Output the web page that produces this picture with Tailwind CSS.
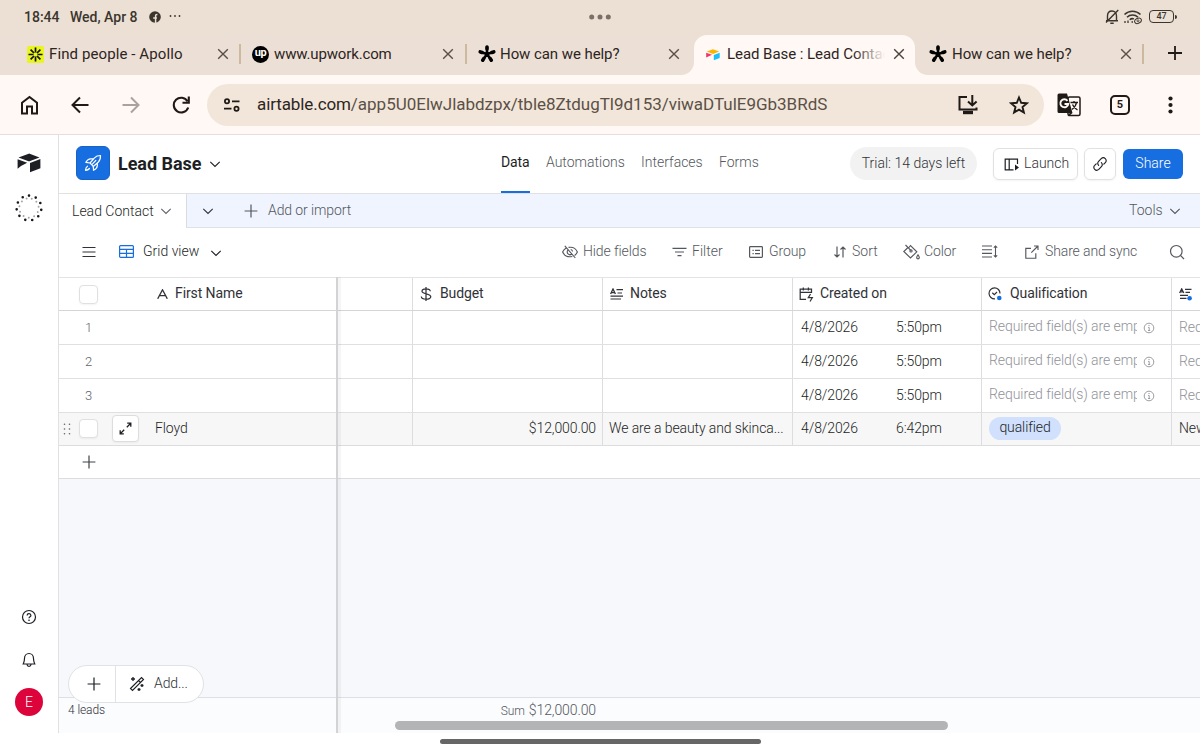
<!DOCTYPE html>
<html lang="en">
<head>
  <meta charset="UTF-8" />
  <title>Lead Base : Lead Contact - Airtable</title>
  <meta name="viewport" content="width=device-width, initial-scale=1.0" />
  <script src="https://cdn.jsdelivr.net/npm/@tailwindcss/browser@4"></script>
</head>
<body class="w-[1200px] h-[750px] overflow-hidden bg-white font-['Roboto',sans-serif] text-[14px] text-[#1d1f25] whitespace-nowrap">

  <!-- shared icons -->
  <svg class="hidden">
    <symbol id="close" viewBox="0 0 12 12"><path d="M1.2 1.2l9.6 9.6M10.8 1.2l-9.6 9.6" fill="none" stroke="currentColor" stroke-width="1.4" /></symbol>
    <symbol id="chevron" viewBox="0 0 12 12"><path d="M1.300 3.800L6 8.500l4.700-4.700" fill="none" stroke="currentColor" stroke-width="1.100" /></symbol>
    <symbol id="plus" viewBox="0 0 14 14"><path d="M7 .6v12.800M.6 7h12.800" fill="none" stroke="currentColor" stroke-width="1.2" /></symbol>
    <symbol id="aster" viewBox="-9 -9 18 18">
      <g fill="none" stroke="#000" stroke-linecap="round">
        <path d="M0 0V-7M0 0L6.800-2.100M0 0L4.300 6.200M0 0L-4.300 6.200M0 0L-6.800-2.100" stroke-width="2.600" />
        <path d="M0-5V-7M4.900-1.500L6.800-2.100M3.200 4.600L4.300 6.200M-3.200 4.600L-4.300 6.200M-4.900-1.500L-6.800-2.100" stroke-width="3.500" />
      </g>
    </symbol>
    <symbol id="info" viewBox="0 0 12 12"><circle cx="6" cy="6" r="4.800" fill="none" stroke="currentColor" stroke-width=".9" /><path d="M5.200 5.500H6.200V8.500M5 8.500h2.200" fill="none" stroke="currentColor" stroke-width=".9" /><circle cx="6" cy="3.600" r=".7" fill="currentColor" /></symbol>
    <symbol id="longtext" viewBox="0 0 14 12"><path d="M.6 6L3 1l2.400 5M1.400 4.600h3.200" fill="none" stroke="currentColor" stroke-width="1.300" /><path d="M6.500 1.600H13M7.500 5H12M.5 8.200H13M.5 11H11" fill="none" stroke="currentColor" stroke-width="1.200" /></symbol>
  </svg>

  <!-- status bar -->
  <div class="h-[35px] bg-[#ece0d4] flex items-center pl-6 pr-[23px] text-[#3b352e] font-medium">
    <span class="w-[46px] text-[14px] mt-[-1px]">18:44</span>
    <span class="w-[79px] text-[14px] mt-[-1px]">Wed, Apr 8</span>
    <svg class="size-3 mt-[-2px]" viewBox="0 0 12 12"><circle cx="6" cy="6" r="5.800" fill="#3b352e" /><path d="M6.600 12V5.200c0-1.300.4-1.800 1.800-1.700M4.200 6.900h3.700" fill="none" stroke="#ece0d4" stroke-width="1.500" /></svg>
    <svg class="w-3 h-3 ml-2 mt-[-3px]" viewBox="0 0 12 12" fill="#3b352e"><circle cx="1.500" cy="6" r=".9" /><circle cx="6" cy="6" r=".9" /><circle cx="10.500" cy="6" r=".9" /></svg>
    <svg class="w-[24px] h-6 ml-[407px] mt-[-2px]" viewBox="0 0 24 24" fill="#7b7067"><circle cx="3.700" cy="12" r="2.500" /><circle cx="12" cy="12" r="2.500" /><circle cx="20.300" cy="12" r="2.500" /></svg>
    <svg class="w-[14px] h-[16px] ml-auto mt-[-2px]" viewBox="0 0 14 16" fill="none" stroke="#3b352e" stroke-width="1.400"><path d="M2.500 11.500V7c0-3 1.700-5 4.500-5s4.500 2 4.500 5v4.500M1 11.800h12M5.300 14.300h3.400M13.300 1L1 13.500" /></svg>
    <svg class="w-[20px] h-[16px] ml-[4px] mt-[-2px]" viewBox="0 0 20 16" fill="none" stroke="#3b352e" stroke-width="1.600"><path d="M1.500 5.500c4.500-4.400 11.500-4.400 16 0M4 8.300c3-3 8-3 11 0M6.800 10.800c1.200-1.200 2.800-1.400 4-.8" /><path d="M2 12v2M5 11.500v2.500M8.500 13h1.500" stroke-width="1.300" /><ellipse cx="15" cy="11.800" rx="3.500" ry="2.500" transform="rotate(-25 15 11.800)" stroke-width="1" /><circle cx="15" cy="11.800" r="1" stroke-width=".8" /></svg>
    <div class="ml-[6px] mt-[-2px] w-[25px] h-[13px] shrink-0 border-[1.500px] border-[#3b352e] rounded-[4px] flex items-center justify-center text-[9px] leading-none">47</div>
    <div class="w-[2px] h-1 ml-px mt-[-2px] bg-[#3b352e] rounded-r"></div>
  </div>

  <!-- browser tabs -->
  <div class="h-10 bg-[#ece0d4] flex items-center text-[15px] text-[#2c251e]">
    <div class="w-[240px] h-full bg-[#ecdfd5] flex items-center pl-[27px] pr-[11px]">
      <svg class="w-[17px] h-[17px] mr-[5px] mt-[-2px]" viewBox="-8.500 -8.500 17 17"><rect x="-8.500" y="-8.500" width="17" height="17" rx="1.500" fill="#e9f522" /><path d="M0-7V-2M0 7V2M-7 0H-2M7 0H2M-4.900-4.900L-1.500-1.500M4.900 4.900L1.500 1.500M-4.900 4.900L-1.500 1.500M4.900-4.900L1.500-1.500" stroke="#111" stroke-width="1.700" /></svg>
      <span class="flex-1 mt-[-2px] tracking-[0.1px]">Find people - Apollo</span>
      <svg class="size-3 mt-[-2px] text-[#5a5048]"><use href="#close" /></svg>
    </div>
    <div class="w-[226px] h-full bg-[#ecdfd5] flex items-center pr-3">
      <div class="w-[2px] h-5 bg-[#cdb99d] mt-[-3px] mr-[11px] -ml-px"></div>
      <div class="w-[17px] h-[17px] mr-[5px] mt-[-2px] rounded-full bg-black text-white text-[11px] leading-[14px] font-bold text-center tracking-[-0.5px]">up</div>
      <span class="flex-1 mt-[-2px] tracking-[-0.14px]">www.upwork.com</span>
      <svg class="size-3 mt-[-2px] text-[#5a5048]"><use href="#close" /></svg>
    </div>
    <div class="w-[228px] h-full bg-[#fff8f4]">
      <div class="h-full bg-[#ecdfd5] rounded-br-[13px] flex items-center pr-[14px]">
        <div class="w-[2px] h-5 bg-[#cdb99d] mt-[-3px] mr-[11px] -ml-px"></div>
        <svg class="w-[18px] h-[18px] mr-1 mt-[-2px]"><use href="#aster" /></svg>
        <span class="flex-1 mt-[-2px] tracking-[-0.07px]">How can we help?</span>
        <svg class="size-3 mt-[-2px] text-[#5a5048]"><use href="#close" /></svg>
      </div>
    </div>
    <div class="w-[221px] h-full bg-[#fff8f4] rounded-t-[13px] flex items-center pl-[12px] pr-[10px]">
      <svg class="w-[14px] h-[12px] mr-[7px] mt-[-1px]" viewBox="0 0 14 12"><path d="M.8 2.600L7 .3l6.200 2.300L7 5z" fill="#fcb400" /><path d="M7.800 6L13.700 3.800V9L7.800 11.300z" fill="#18bfff" /><path d="M.2 3.800L6 5.800.2 8.600z" fill="#f0356a" /></svg>
      <div class="relative w-[158px] overflow-hidden mt-[-2px] tracking-[-0.05px]">Lead Base : Lead Contact<div class="absolute right-0 top-0 w-8 h-full bg-linear-to-r from-[#fff8f4]/0 to-[#fff8f4]"></div></div>
      <svg class="size-3 mt-[-2px] ml-[8px] text-[#4a423b] shrink-0"><use href="#close" /></svg>
    </div>
    <div class="w-[285px] h-full bg-[#fff8f4]">
      <div class="h-full bg-[#ecdfd5] rounded-bl-[13px] flex items-center pl-[14px]">
        <svg class="w-[18px] h-[18px] mr-[5px] mt-[-2px]"><use href="#aster" /></svg>
        <span class="w-[168px] mt-[-2px] tracking-[-0.07px]">How can we help?</span>
        <svg class="size-3 mt-[-2px] text-[#5a5048]"><use href="#close" /></svg>
        <div class="w-[2px] h-5 bg-[#cdb99d] mt-[-3px] ml-[10px]"></div>
        <svg class="w-[14px] h-[14px] ml-[24px] mt-[-4px]" viewBox="0 0 14 14"><path d="M7 0v14M0 7h14" stroke="#1f1a16" stroke-width="1.800" /></svg>
      </div>
    </div>
  </div>

  <!-- address bar -->
  <div class="h-[60px] bg-[#fff8f4] border-b border-[#e5dfdb] flex items-center pl-[20px] text-[#1f1a16]">
    <svg class="w-[19px] h-[20px]" viewBox="0 0 19 20" fill="none" stroke="currentColor" stroke-width="2"><path d="M2 7.800L9.500 2 17 7.800V18.500H12V11.500H7V18.500H2z" /></svg>
    <svg class="w-[18px] h-[18px] ml-[32px]" viewBox="0 0 18 18" fill="none" stroke="currentColor" stroke-width="2"><path d="M17.500 9H2M9 1.500L1.500 9 9 16.500" /></svg>
    <svg class="w-[18px] h-[18px] ml-[33px] text-[#a9a29d]" viewBox="0 0 18 18" fill="none" stroke="currentColor" stroke-width="2"><path d="M.5 9h15M9 1.500L16.500 9 9 16.500" /></svg>
    <svg class="w-[18px] h-[18px] ml-[32px]" viewBox="0 0 18 18" fill="none" stroke="currentColor" stroke-width="2.100"><path d="M15.500 5.200A7.400 7.400 0 1 0 16.200 11.500M16.800 .5V6.700H10.500" /></svg>
    <div class="ml-[17px] w-[837px] h-[42px] rounded-full bg-[#f2e6da] flex items-center pl-4 pr-[15px]">
      <svg class="w-[18px] h-[14px]" viewBox="0 0 18 14" fill="none" stroke="currentColor" stroke-width="1.800"><circle cx="4" cy="3.300" r="2.100" /><path d="M9 3.300h7.500M1 10.700h7.500" /><circle cx="13.500" cy="10.700" r="2.100" /></svg>
      <span class="ml-[16px] flex-1 text-[17px] text-[#5b5046] tracking-[-0.015px]"><span class="text-[#2c251e] tracking-[-0.1px]">airtable.com</span>/app5U0ElwJlabdzpx/tble8ZtdugTl9d153/viwaDTulE9Gb3BRdS</span>
      <svg class="w-5 h-[20px]" viewBox="0 0 20 20" fill="none" stroke="currentColor" stroke-width="2"><path d="M9 2H1.500V14.500H18.500V12.500M14.300 0V10M10 6.500L14.300 10.500 18.600 6.500" /><path d="M5 17.500h10" stroke-width="3.400" /></svg>
      <svg class="w-[20px] h-[20px] ml-[31px]" viewBox="0 0 20 20" fill="none" stroke="currentColor" stroke-width="1.900"><path d="M10 2.500L12.200 7.800 17.900 8.300 13.500 12 14.900 17.600 10 14.600 5.100 17.600 6.500 12 2.100 8.300 7.800 7.800z" /></svg>
    </div>
    <svg class="w-6 h-6 ml-[13px]" viewBox="0 0 24 24"><rect x="11" y="4" width="12" height="18.500" rx="1.500" fill="none" stroke="currentColor" stroke-width="1.500" /><path d="M2 .5H10L15.500 20H2A1.500 1.500 0 0 1 .5 18.500V2A1.500 1.500 0 0 1 2 .5z" fill="currentColor" /><path d="M12.500 20L11.500 23.500 15.500 20z" fill="currentColor" /><path d="M10.500 7.800A4 4 0 1 0 11.300 11H7.500" fill="none" stroke="#fff8f4" stroke-width="1.900" /><path d="M13.500 9.500H21M17 8V9.500M19.500 9.500C19 12.500 17 15 15 16.500M15.500 11.500C16.500 14 18 15.500 20.500 17" fill="none" stroke="currentColor" stroke-width="1.300" /></svg>
    <div class="ml-[29px] w-[20px] h-[20px] border-2 border-current rounded-[5px] flex items-center justify-center text-[11px] font-bold leading-none">5</div>
    <svg class="w-[5px] h-[18px] ml-[38px]" viewBox="0 0 5 18" fill="currentColor"><circle cx="2.500" cy="2.500" r="2.100" /><circle cx="2.500" cy="9" r="2.100" /><circle cx="2.500" cy="15.500" r="2.100" /></svg>
  </div>

  <div class="h-[598px] flex font-[350]">
    <!-- left rail -->
    <aside class="w-[59px] shrink-0 border-r border-[#e1e1e3] flex flex-col items-center">
      <svg class="w-6 h-5 mt-[18px]" viewBox="0 0 24 20" fill="#1d1f25"><path d="M1.500 4.500L11.700.7Q12.200.5 12.700.7L22.500 4.500 12.500 8.200Q12 8.400 11.500 8.200z" /><path d="M13 10L23.400 6V15.300L13 19.300z" /><path d="M.6 6.300L10.200 9.800 4 13 .6 15.800z" /></svg>
      <svg class="w-7 h-7 mt-[21px]" viewBox="-14 -14 28 28" fill="none" stroke-linecap="round"><circle r="12.400" stroke="#16181d" stroke-width="2.600" stroke-dasharray="0 7.083" transform="rotate(-90)" /><circle r="9.700" stroke="#a5a5a7" stroke-width="2" stroke-dasharray="0 5.541" transform="rotate(-73.600)" /></svg>
      <svg class="w-4 h-4 mt-auto" viewBox="0 0 16 16" fill="none" stroke="#1d1f25" stroke-width="1.200"><circle cx="8" cy="8" r="6.500" /><path d="M6.100 6.500C6.200 4 9.900 4.200 9.900 6.500 9.900 7.800 8 7.900 8 9.300" /><circle cx="8" cy="11.200" r=".5" fill="#1d1f25" stroke-width=".6" /></svg>
      <svg class="w-4 h-4 mt-[27px]" viewBox="0 0 16 16" fill="none" stroke="#1d1f25" stroke-width="1.200"><path d="M3.500 6.500C3.500 3.500 5.500 1.500 8 1.500S12.500 3.500 12.500 6.500C12.500 9.500 13.200 10.700 13.800 12H2.200C2.800 10.700 3.500 9.500 3.500 6.500zM6 12.500C6.300 15 9.700 15 10 12.500" /></svg>
      <div class="size-7 mt-[20px] mb-[17px] rounded-full bg-[#dc043b] text-white flex items-center justify-center text-[14px] font-light">E</div>
    </aside>

    <main class="w-[1141px] overflow-hidden">
      <!-- base header -->
      <header class="h-[59px] border-b border-[#e1e1e3] flex items-center pl-[17px] text-[#54575d]">
        <div class="w-[34px] h-[34px] mt-[-2px] rounded-[6px] bg-[#166ee1] border border-[#1a61c4] flex items-center justify-center">
          <svg class="w-[18px] h-[18px]" viewBox="0 0 18 18" fill="none" stroke="#fff" stroke-width="1.200" stroke-linejoin="round" stroke-linecap="round"><path d="M6 9L10.500 3.800C12.300 1.900 14.500 1.500 16.500 1.500 16.600 4 16 6.500 14.200 8.200L9 12.800M9.500 4.800H6.500C5 4.800 3 6.300 1.800 8.300L6 9 9.300 12.300 9.500 16.300C11.500 15.300 13.300 13.500 13.300 11.800V9.200M8.500 9.800L11.800 6.500M5.500 14.500C4.500 15.700 3 16.200 1.500 16.300 1.600 14.800 2 13 3.500 12.200" /></svg>
        </div>
        <h1 class="ml-2 mt-[-2px] w-[91px] text-[18px] font-bold text-[#1d1f25] tracking-[-0.05px]">Lead Base</h1>
        <svg class="size-3 mt-[-1px] text-[#1d1f25]"><use href="#chevron" /></svg>
        <nav class="ml-[280px] h-full flex">
          <div class="w-[29px] mr-4 h-full pt-[17px] font-normal text-[#1d1f25] border-b-2 border-[#166ee1] tracking-[-0.1px]">Data</div>
          <div class="w-[95px] pt-[17px]">Automations</div>
          <div class="w-[78px] pt-[17px]">Interfaces</div>
          <div class="w-[131px] pt-[17px]">Forms</div>
        </nav>
        <div class="w-[127px] h-[33px] mt-[-2px] rounded-full bg-[#f2f2f2] text-[#303238] flex items-center justify-center">Trial: 14 days left</div>
        <div class="ml-[16px] w-[85px] h-[32px] rounded-[6px] border border-[#e1e1e3] shadow-xs flex items-center pl-[10px] text-[#303238]">
          <svg class="w-[15px] h-[13px] mr-[5px] shrink-0" viewBox="0 0 15 13" fill="none" stroke="#1d1f25" stroke-width="1.200"><path d="M9.500 11.800H1.200V1.200H13.500V6M5.200 1.200V11.800" /><path d="M11 6.500L15 9.500 11 12.500z" fill="#1d1f25" stroke="none" /></svg>
          <span class="mt-[-2px]">Launch</span>
        </div>
        <div class="ml-[6px] w-[32px] h-[32px] rounded-[6px] border border-[#e1e1e3] shadow-xs flex items-center justify-center">
          <svg class="w-4 h-4" viewBox="0 0 16 16" fill="none" stroke="#1d1f25" stroke-width="1.150" stroke-linecap="round"><path d="M6.600 9.400C5.400 8.200 5.400 6.500 6.600 5.300L9.200 2.600C10.400 1.500 12.200 1.500 13.300 2.600 14.500 3.800 14.500 5.600 13.300 6.700L11.800 8.200M9.400 6.600C10.600 7.800 10.600 9.500 9.400 10.700L6.800 13.400C5.600 14.500 3.800 14.500 2.700 13.400 1.500 12.200 1.500 10.400 2.700 9.300L4.200 7.800" /></svg>
        </div>
        <div class="ml-[7px] w-[60px] h-[30px] rounded-[6px] bg-[#166ee1] text-white text-center leading-[28px]">Share</div>
      </header>

      <!-- table tabs -->
      <div class="h-[34px] bg-[#f0f4ff] flex text-[#54575d]">
        <div class="w-[128px] bg-white border-r border-[#d9dce3] flex items-center pl-[13px] text-[#1d1f25]">
          <span class="w-[88px]">Lead Contact</span>
          <svg class="size-3 text-[#606369]"><use href="#chevron" /></svg>
        </div>
        <div class="flex-1 border-b border-[#dfe1e8] flex items-center pl-[15px] pr-[19px]">
          <svg class="size-3 text-[#303238]"><use href="#chevron" /></svg>
          <svg class="w-[14px] h-[14px] ml-[30px] mr-[10px]"><use href="#plus" /></svg>
          <span class="flex-1 tracking-[-0.1px]">Add or import</span>
          <span class="w-[40px]">Tools</span>
          <svg class="size-3"><use href="#chevron" /></svg>
        </div>
      </div>

      <!-- view bar -->
      <div class="h-[49px] flex items-center pl-[23px] pb-[2px] text-[#54575d]">
        <svg class="w-[14px] h-[12px]" viewBox="0 0 14 12"><path d="M.5 1.500h13M.5 6h13M.5 10.500h13" stroke="#303238" stroke-width="1.200" /></svg>
        <svg class="w-[15px] h-[13px] ml-[23px] mr-[9px]" viewBox="0 0 15 13" fill="none" stroke="#166ee1" stroke-width="1.200"><rect x=".6" y=".6" width="13.800" height="11.800" rx="1" /><path d="M.6 4.300h13.800M.6 8.300h13.800M7.500 4.300V12.400" /></svg>
        <span class="w-[67px] text-[#1d1f25]">Grid view</span>
        <svg class="size-3 mt-[2px] text-[#1d1f25]"><use href="#chevron" /></svg>
        <svg class="w-4 h-4 ml-[340px] mr-[5px]" viewBox="0 0 16 16" fill="none" stroke="currentColor" stroke-width="1.100"><path d="M2.800 1.800L13.300 14M6.500 3.400C11.500 2.500 14.300 5.500 15.400 8 14.800 9.500 13.800 10.600 12.600 11.500M10.300 12.500C4.500 13.700 1.700 10.500.6 8 1.300 6.200 2.700 4.900 4.200 4M5.900 6.200A2.600 2.600 0 0 0 9.800 9.800M8.700 5.500A2.600 2.600 0 0 1 10.600 7.500" /></svg>
        <span class="w-[89px] tracking-[-0.1px]">Hide fields</span>
        <svg class="w-[15px] h-[10px] mr-[5px]" viewBox="0 0 15 10"><path d="M.5 1.300h14M3 5h9M5.500 8.700h4" stroke="currentColor" stroke-width="1.200" /></svg>
        <span class="w-[57px]">Filter</span>
        <svg class="w-[14px] h-[12px] mr-[6px]" viewBox="0 0 14 12" fill="none" stroke="currentColor" stroke-width="1.200"><rect x=".6" y=".6" width="12.800" height="10.800" rx=".8" /><path d="M3.500 4.300h1.200M6 4.300h5M3.500 7.700h1.200M6 7.700h5" /></svg>
        <span class="w-[65px] tracking-[-0.1px]">Group</span>
        <svg class="w-[12px] h-[12px] mr-[6px]" viewBox="0 0 12 12" fill="none" stroke="currentColor" stroke-width="1.200"><path d="M3 .5V11M.5 8.500L3 11 5.500 8.500M9 11.500V1M6.500 3.500L9 1 11.500 3.500" /></svg>
        <span class="w-[51px]">Sort</span>
        <svg class="w-[17px] h-[16px] mr-[4px]" viewBox="0 0 17 16" fill="none" stroke="currentColor" stroke-width="1.150"><path d="M2.500 1L7.600 6.200M5.500 4L7.500 1.500 13.800 7.800 7.500 14 .8 7.500 5 3.500" /><circle cx="8" cy="6.900" r="1.100" /><path d="M15 10.800C16 12 16.300 12.600 16.300 13.500 16.300 15.300 13.700 15.300 13.700 13.500 13.700 12.600 14 12 15 10.800z" /></svg>
        <span class="w-[58px] tracking-[-0.1px]">Color</span>
        <svg class="w-[16px] h-[13px] mr-[27px]" viewBox="0 0 16 13" fill="none" stroke="currentColor" stroke-width="1.100"><path d="M0 1h10M0 4.700h10M0 8.400h10M0 12h10M13.500 1V12M11.800 2.700L13.500 1 15.200 2.700M11.800 10.300L13.500 12 15.200 10.300" /></svg>
        <svg class="w-[14px] h-[14px] mr-[6px]" viewBox="0 0 14 14" fill="none" stroke="currentColor" stroke-width="1.150"><path d="M6 3.300H.8V13.200H10.800V8.200M6.300 7.700L13 1M9 1H13V5" /></svg>
        <span class="w-[124px] tracking-[-0.12px]">Share and sync</span>
        <svg class="w-4 h-4" viewBox="0 0 16 16" fill="none" stroke="currentColor" stroke-width="1.200"><circle cx="7.300" cy="7.300" r="5.800" /><path d="M11.400 11.400L15 15" /></svg>
      </div>

      <!-- grid -->
      <div class="relative h-[456px] bg-[#f6f8fc] flex flex-col tracking-[-0.1px]">
        <div class="h-[34px] bg-white border-y border-b-[#d5d5d8] border-t-[#e4e4e6] flex font-normal text-[#303238] *:shrink-0">
          <div class="w-[278px] flex items-center pl-[20px]">
            <div class="w-[19px] h-[19px] rounded-[4px] border border-[#e0e0e2] shadow-xs"></div>
            <svg class="w-[11px] h-[10px] ml-[59px] mr-[7px]" viewBox="0 0 11 10"><path d="M.7 9.800L5.500.8 10.300 9.800M2.400 6.700h6.200" fill="none" stroke="currentColor" stroke-width="1.300" /></svg>
            <span class="mt-[-2px]">First Name</span>
          </div>
          <div class="w-[76px] border-r border-[#dddde0]"></div>
          <div class="w-[190px] border-r border-[#dddde0] flex items-center pl-[7px]">
            <svg class="w-3 h-[14px] mr-2" viewBox="0 0 12 14" fill="none" stroke="currentColor" stroke-width="1.250"><path d="M6 0V14M10.300 4.200C10 1 2 1 2 4.200 2 7.500 10.800 6.200 10.800 9.800 10.800 13 1.500 13 1.300 9.500" /></svg>
            <span class="mt-[-2px]">Budget</span>
          </div>
          <div class="w-[190px] border-r border-[#dddde0] flex items-center pl-[7px]">
            <svg class="w-[14px] h-[12px] mr-[6px]"><use href="#longtext" /></svg>
            <span class="mt-[-2px]">Notes</span>
          </div>
          <div class="w-[189px] border-r border-[#dddde0] flex items-center pl-[6px]">
            <svg class="w-[15px] h-[15px] mr-[6px]" viewBox="0 0 15 15" fill="none" stroke="currentColor" stroke-width="1.250"><path d="M7 12.400H1.200V2.200H12.500V6M1.200 5.300H12.500M4.300.5V3.500M9.400.5V3.500M11.500 7L9.300 10.700H13.300L11 14.500" /></svg>
            <span class="mt-[-2px]">Created on</span>
          </div>
          <div class="w-[190px] border-r border-[#dddde0] flex items-center pl-[6px]">
            <svg class="w-[14px] h-[14px] mr-[8px]" viewBox="0 0 14 14" fill="none" stroke="currentColor" stroke-width="1.200"><path d="M7 11.800A5.500 5.500 0 1 1 12 6.500M4.300 5.700L6.300 7.600 9 5" /><circle cx="11.300" cy="11" r="2.300" fill="#166ee1" stroke="none" /></svg>
            <span class="mt-[-2px]">Qualification</span>
          </div>
          <div class="flex items-center pl-[7px]">
            <svg class="w-[14px] h-[13px]" viewBox="0 0 14 13" fill="none" stroke="currentColor" stroke-width="1.200"><path d="M.6 5L2.700.8 4.800 5M1.300 3.800h2.800M6 1.300H12.500M6.500 4.300H11M1 7.300H9M1 10.300H7.500" /><circle cx="10.600" cy="10.300" r="2.300" fill="#166ee1" stroke="none" /></svg>
          </div>
        </div>

        <div class="h-[34px] bg-white border-b border-[#e0e0e2] flex items-center text-[#1d1f25] *:shrink-0">
          <div class="w-[59px] text-center text-[13px] text-[#606369]">1</div>
          <div class="w-[295px] h-full border-r border-[#dddde0]"></div>
          <div class="w-[190px] h-full border-r border-[#dddde0]"></div>
          <div class="w-[190px] h-full border-r border-[#dddde0]"></div>
          <div class="w-[189px] h-full border-r border-[#dddde0] flex items-center pl-2"><span class="w-[95px]">4/8/2026</span>5:50pm</div>
          <div class="w-[190px] h-full border-r border-[#dddde0] flex items-center pl-[7px] text-[#919399]"><span class="w-[148px] overflow-hidden mt-[-2px] tracking-[-0.07px] font-light">Required field(s) are empty</span><svg class="size-3 ml-[6px]"><use href="#info" /></svg></div>
          <div class="pl-[7px] font-light text-[#919399]">Required</div>
        </div>
        <div class="h-[34px] bg-white border-b border-[#e0e0e2] flex items-center text-[#1d1f25] *:shrink-0">
          <div class="w-[59px] text-center text-[13px] text-[#606369]">2</div>
          <div class="w-[295px] h-full border-r border-[#dddde0]"></div>
          <div class="w-[190px] h-full border-r border-[#dddde0]"></div>
          <div class="w-[190px] h-full border-r border-[#dddde0]"></div>
          <div class="w-[189px] h-full border-r border-[#dddde0] flex items-center pl-2"><span class="w-[95px]">4/8/2026</span>5:50pm</div>
          <div class="w-[190px] h-full border-r border-[#dddde0] flex items-center pl-[7px] text-[#919399]"><span class="w-[148px] overflow-hidden mt-[-2px] tracking-[-0.07px] font-light">Required field(s) are empty</span><svg class="size-3 ml-[6px]"><use href="#info" /></svg></div>
          <div class="pl-[7px] font-light text-[#919399]">Required</div>
        </div>
        <div class="h-[34px] bg-white border-b border-[#e0e0e2] flex items-center text-[#1d1f25] *:shrink-0">
          <div class="w-[59px] text-center text-[13px] text-[#606369]">3</div>
          <div class="w-[295px] h-full border-r border-[#dddde0]"></div>
          <div class="w-[190px] h-full border-r border-[#dddde0]"></div>
          <div class="w-[190px] h-full border-r border-[#dddde0]"></div>
          <div class="w-[189px] h-full border-r border-[#dddde0] flex items-center pl-2"><span class="w-[95px]">4/8/2026</span>5:50pm</div>
          <div class="w-[190px] h-full border-r border-[#dddde0] flex items-center pl-[7px] text-[#919399]"><span class="w-[148px] overflow-hidden mt-[-2px] tracking-[-0.07px] font-light">Required field(s) are empty</span><svg class="size-3 ml-[6px]"><use href="#info" /></svg></div>
          <div class="pl-[7px] font-light text-[#919399]">Required</div>
        </div>
        <!-- hovered row -->
        <div class="h-[33px] bg-[#f7f7f7] border-b border-[#dddde0] flex items-center text-[#1d1f25] *:shrink-0">
          <div class="w-[354px] h-full border-r border-[#dddde0] flex items-center pl-[4px] pb-px">
            <svg class="w-2 h-3 mr-[8px]" viewBox="0 0 8 12" fill="#606369"><circle cx="1.500" cy="1.200" r=".8" /><circle cx="6.500" cy="1.200" r=".8" /><circle cx="1.500" cy="6" r=".8" /><circle cx="6.500" cy="6" r=".8" /><circle cx="1.500" cy="10.800" r=".8" /><circle cx="6.500" cy="10.800" r=".8" /></svg>
            <div class="w-[19px] h-[19px] rounded-[4px] bg-white border border-[#e0e0e2] shadow-xs"></div>
            <div class="w-[27px] h-[27px] ml-[14px] mr-[16px] rounded-[4px] bg-white border border-[#dddde0] shadow-xs flex items-center justify-center">
              <svg class="w-[13px] h-[13px]" viewBox="0 0 13 13" fill="none" stroke="#1d1f25" stroke-width="1.300"><path d="M7.800 5.200L11.500 1.500M8.200 1.200H11.800V4.800M5.200 7.800L1.500 11.500M1.200 8.200V11.800H4.800" /></svg>
            </div>
            <span>Floyd</span>
          </div>
          <div class="w-[190px] h-full border-r border-[#dddde0] flex items-center justify-end pr-[6px] pb-px">$12,000.00</div>
          <div class="w-[190px] h-full border-r border-[#dddde0] flex items-center pl-[6px] pb-px">We are a beauty and skinca...</div>
          <div class="w-[189px] h-full border-r border-[#dddde0] flex items-center pl-2 pb-px"><span class="w-[95px]">4/8/2026</span>6:42pm</div>
          <div class="w-[190px] h-full border-r border-[#dddde0] flex items-center pl-[7px]"><div class="w-[72px] h-[23px] mt-[-1px] rounded-full bg-[#d0e0fd] text-center leading-[21px]">qualified</div></div>
          <div class="pl-[7px] pb-px">New lead</div>
        </div>
        <div class="h-[33px] bg-white border-b border-[#dddde0] flex items-center pl-[23px] text-[#40434a]">
          <svg class="w-[14px] h-[14px]"><use href="#plus" /></svg>
        </div>

        <!-- summary footer -->
        <div class="mt-auto h-9 bg-[#fbfcfe] border-t border-[#dddfe4] flex items-start pl-[9px] text-[#54575d]">
          <span class="w-[432px] pt-[3px] text-[12px] text-[#303238]">4 leads</span>
          <span class="pt-[2px] w-[96px] text-right"><span class="text-[12px] mr-1">Sum</span>$12,000.00</span>
        </div>

        <!-- frozen column divider -->
        <div class="absolute left-[277px] top-0 w-[5px] h-full bg-black/4 border-l-2 border-[#d3d3d6]"></div>
        <!-- floating add buttons -->
        <div class="absolute left-[9px] top-[388px] w-[136px] h-[38px] rounded-full bg-white border border-[#e0e2e6] flex items-center text-[#303238]">
          <div class="w-[47px] h-full border-r border-[#e0e2e6] flex items-center justify-center pl-[4px]"><svg class="w-[14px] h-[14px] text-[#1d1f25]"><use href="#plus" /></svg></div>
          <svg class="w-4 h-4 ml-[13px] mr-[9px]" viewBox="0 0 16 16" fill="none" stroke="#1d1f25" stroke-width="1.150"><path d="M1.500 12.500L12.500 1.500 14.500 3.500 3.500 14.500zM9.500 4.500L11.500 6.500" /><path d="M4 1v4M2 3h4M13 8v3M11.500 9.500h3M10 12v3M8.500 13.500h3" stroke-width="1.300" /></svg>
          <span class="mt-[-1px]">Add...</span>
        </div>
        <!-- horizontal scrollbar -->
        <div class="absolute left-[336px] top-[444px] w-[553px] h-[9px] rounded-full bg-[#b3b4b6]"></div>
      </div>
    </main>
  </div>

  <!-- home gesture bar -->
  <div class="h-[17px] flex justify-center pt-[6px]"><div class="w-[321px] h-[5px] rounded-full bg-[#666]"></div></div>

</body>
</html>
